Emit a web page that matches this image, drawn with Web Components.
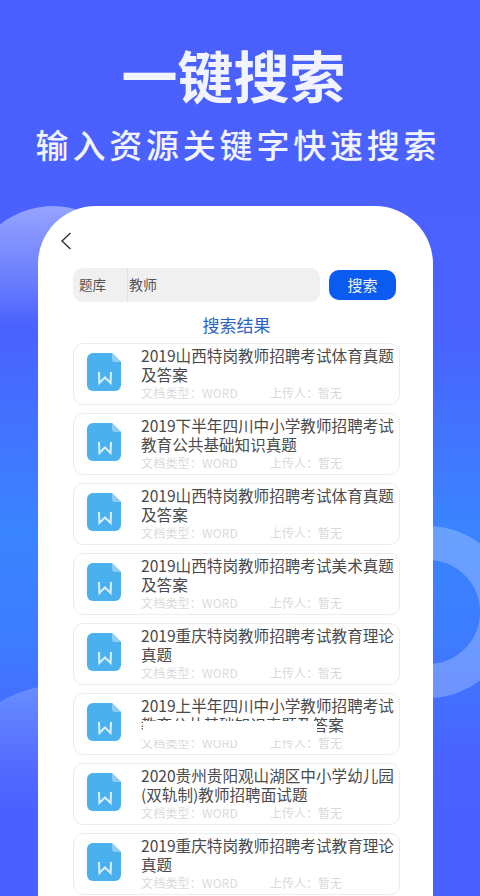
<!DOCTYPE html>
<html lang="zh">
<head>
<meta charset="utf-8">
<title>一键搜索</title>
<style>
html, body { margin: 0; height: 100%; overflow: hidden; }
body { font-family: "Noto Sans CJK SC", sans-serif; }
</style>
</head>
<body>
<promo-page>
  <hero-head slot="head" title-text="一键搜索" sub-text="输入资源关键字快速搜索"></hero-head>
  <search-bar scope="题库" query="教师" button="搜索"></search-bar>
  <section-title>搜索结果</section-title>
  <doc-row>2019山西特岗教师招聘考试体育真题及答案</doc-row>
  <doc-row>2019下半年四川中小学教师招聘考试教育公共基础知识真题</doc-row>
  <doc-row>2019山西特岗教师招聘考试体育真题及答案</doc-row>
  <doc-row>2019山西特岗教师招聘考试美术真题及答案</doc-row>
  <doc-row>2019重庆特岗教师招聘考试教育理论真题</doc-row>
  <doc-row glitch>2019上半年四川中小学教师招聘考试教育公共基础知识真题及答案</doc-row>
  <doc-row>2020贵州贵阳观山湖区中小学幼儿园(双轨制)教师招聘面试题</doc-row>
  <doc-row>2019重庆特岗教师招聘考试教育理论真题</doc-row>
</promo-page>

<script>
class PromoPage extends HTMLElement{
    connectedCallback(){
        this.attachShadow({mode:'open'}).innerHTML = `
        <style>
        :host {
            display: flex;
            flex-direction: column;
            position: relative;
            width: 480px;
            height: 896px;
            overflow: hidden;
            background: linear-gradient(180deg, #4a60fe 0, #4a62fe 330px, #3a84ff 530px, #3d7cff 640px, #4a62ff 760px, #4a60ff 100%);
        }
        .deco { position: absolute; border-radius: 50%; }
        #blobTop {
            left: -32px; top: 206px; width: 170px; height: 170px;
            background: linear-gradient(180deg, rgba(255,255,255,.42) 0, rgba(255,255,255,.14) 50%, rgba(255,255,255,0) 70%);
        }
        #blobBottom {
            left: -55px; top: 685px; width: 230px; height: 230px;
            background: linear-gradient(180deg, rgba(255,255,255,.2) 0, rgba(255,255,255,.04) 40%, rgba(255,255,255,0) 55%);
        }
        #ring {
            left: 342px; top: 526px; width: 172px; height: 172px;
            box-sizing: border-box;
            border: 34px solid rgba(255,255,255,.24);
        }
        #card {
            position: relative;
            flex: 1;
            min-height: 0;
            box-sizing: border-box;
            width: 395px;
            margin-left: 38px;
            padding: 26px 33px 0 35px;
            background: #fff;
            border-radius: 58px 58px 0 0;
            overflow: hidden;
        }
        #back { display: block; width: 12px; height: 18px; margin: 0 0 18px -13px; }
        #list { display: flex; flex-direction: column; gap: 8px; }
        </style>
        <div class="deco" id="blobTop"></div>
        <div class="deco" id="blobBottom"></div>
        <div class="deco" id="ring"></div>
        <slot name="head"></slot>
        <div id="card">
            <svg id="back" viewBox="0 0 12 18" fill="none" stroke="#333" stroke-width="1.4"><path d="M10.5 1L2 9l8.5 8"/></svg>
            <div id="list"><slot></slot></div>
        </div>
        `
    }
}


class HeroHead extends HTMLElement{
    connectedCallback(){
        this.attachShadow({mode:'open'}).innerHTML = `
        <style>
        :host {
            display: flex;
            flex-direction: column;
            align-items: center;
            height: 206px;
            color: #f1f3ff;
            flex: none;
        }
        #title { margin-top: 36px; padding-right: 13px; height: 76px; line-height: 76px; font-size: 56px; font-weight: 700; }
        #sub { margin-top: 10px; height: 44px; line-height: 44px; font-size: 33px; letter-spacing: 3.8px; padding-right: 4px; font-weight: 500; white-space: nowrap; }
        </style>
        <div id="title">${this.getAttribute('title-text')}</div>
        <div id="sub">${this.getAttribute('sub-text')}</div>
        `
    }
}


class SearchBar extends HTMLElement{
    connectedCallback(){
        this.attachShadow({mode:'open'}).innerHTML = `
        <style>
        :host { display: flex; align-items: center; gap: 9px; width: 323px; height: 34px; }
        #box {
            flex: 1;
            height: 34px;
            display: flex;
            align-items: center;
            background: #f0f0f0;
            border-radius: 10px;
            color: #555;
        }
        #scope { width: 48px; padding-left: 6px; font-size: 13.5px; line-height: 32px; height: 34px; border-right: 1px solid #e2e2e2; }
        #query { padding-left: 1px; font-size: 14px; line-height: 32px; height: 34px; }
        #button {
            width: 67px;
            height: 30px;
            line-height: 29px;
            text-align: center;
            background: #0a5cf0;
            color: #eef3ff;
            font-size: 15px;
            border-radius: 10px;
        }
        </style>
        <div id="box">
            <div id="scope">${this.getAttribute('scope')}</div>
            <div id="query">${this.getAttribute('query')}</div>
        </div>
        <div id="button">${this.getAttribute('button')}</div>
        `
    }
}


class SectionTitle extends HTMLElement{
    connectedCallback(){
        this.attachShadow({mode:'open'}).innerHTML = `
        <style>
        :host {
            display: block;
            width: 327px;
            height: 25px;
            line-height: 30px;
            text-align: center;
            font-size: 17px;
            color: #2c62c4;
        }
        </style>
        <slot></slot>
        `
    }
}


class DocRow extends HTMLElement{
    connectedCallback(){
        const glitch = this.hasAttribute('glitch') ? '<div id="glitch"></div>' : ''
        this.attachShadow({mode:'open'}).innerHTML = `
        <style>
        :host {
            display: flex;
            position: relative;
            box-sizing: border-box;
            width: 327px;
            height: 62px;
            padding-left: 13px;
            border: 1px solid #ececec;
            border-radius: 10px;
            background: #fff;
            flex: none;
        }
        svg { flex: none; width: 34px; height: 38px; margin-top: 9px; }
        #text { margin-left: 20px; width: 262px; padding-top: 2px; }
        #title {
            height: 37px;
            font-size: 15.6px;
            line-height: 18.5px;
            color: #4a4a4a;
            line-break: anywhere;
        }
        #meta { display: flex; font-size: 12px; line-height: 16px; color: #dadada; margin-top: 2px; }
        #meta span:first-child { width: 129px; letter-spacing: .2px; }
        #glitch { position: absolute; left: 69px; top: 27px; width: 174px; height: 19px; background: #fff; }
        </style>
        <svg viewBox="0 0 34 38">
            <path d="M6 0H25L34 9V32a6 6 0 0 1-6 6H6a6 6 0 0 1-6-6V6a6 6 0 0 1 6-6Z" fill="#4bb0ee"/>
            <path d="M25 0L34 9H28a3 3 0 0 1-3-3Z" fill="#8ecdf3"/>
            <path d="M12 19L12.4 30L18 24.5L23.6 30L24 19" fill="none" stroke="#d9f0fc" stroke-width="2"/>
        </svg>
        <div id="text">
            <div id="title"><slot></slot></div>
            <div id="meta"><span>文档类型：WORD</span><span>上传人：暂无</span></div>
        </div>
        ${glitch}
        `
    }
}


customElements.define('promo-page', PromoPage)
customElements.define('hero-head', HeroHead)
customElements.define('search-bar', SearchBar)
customElements.define('section-title', SectionTitle)
customElements.define('doc-row', DocRow)
</script>
</body>
</html>
